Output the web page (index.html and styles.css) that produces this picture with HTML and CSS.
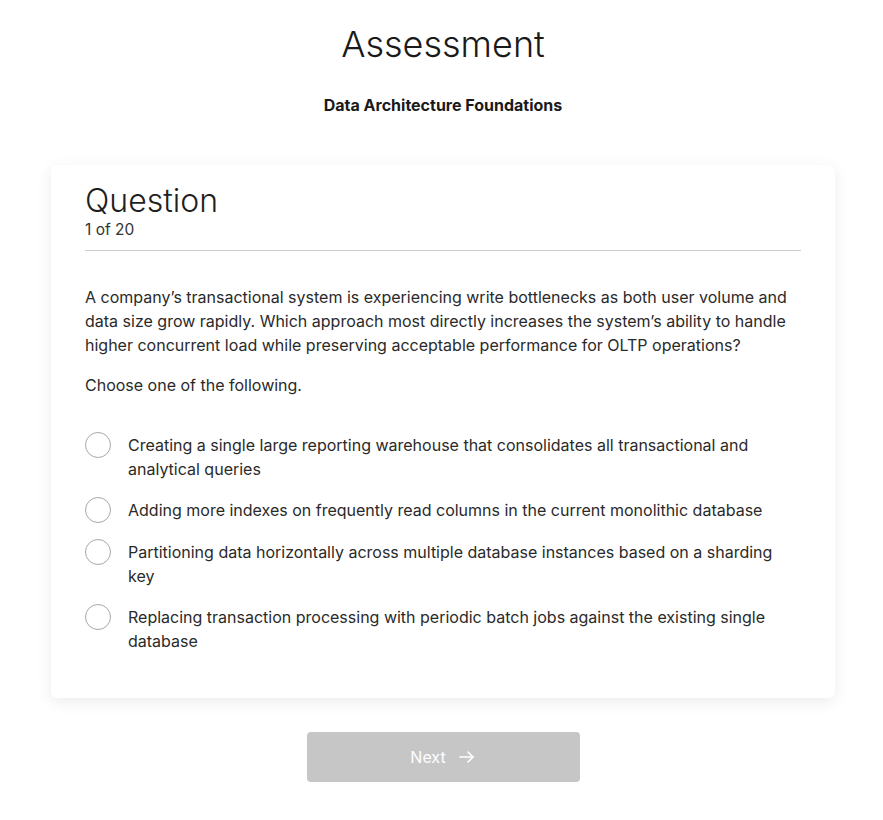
FILE: index.html
```html
<!DOCTYPE html>
<html lang="en">
<head>
    <meta charset="UTF-8">
    <meta name="viewport" content="width=device-width, initial-scale=1.0">
    <title>Assessment</title>
    <link rel="stylesheet" href="styles.css">
</head>
<body>
    <div class="page">
        <h1 class="title">Assessment</h1>
        <p class="subtitle">Data Architecture Foundations</p>

        <div class="card">
            <div class="card-head">
                <h2>Question</h2>
                <span class="counter">1 of 20</span>
            </div>
            <p class="question">A company’s transactional system is experiencing write bottlenecks as both user volume and data size grow rapidly. Which approach most directly increases the system’s ability to handle higher concurrent load while preserving acceptable performance for OLTP operations?</p>
            <p class="hint">Choose one of the following.</p>
            <ul class="options">
                <li><span class="radio"></span><span>Creating a single large reporting warehouse that consolidates all transactional and analytical queries</span></li>
                <li><span class="radio"></span><span>Adding more indexes on frequently read columns in the current monolithic database</span></li>
                <li><span class="radio"></span><span>Partitioning data horizontally across multiple database instances based on a sharding key</span></li>
                <li><span class="radio"></span><span>Replacing transaction processing with periodic batch jobs against the existing single database</span></li>
            </ul>
        </div>

        <button class="next" disabled>
            Next
            <svg width="18" height="18" viewBox="0 0 18 18" fill="none" stroke="#fff" stroke-width="1.6" stroke-linecap="round" stroke-linejoin="round">
                <path d="M2 9h13"/>
                <path d="M10 4l5 5-5 5"/>
            </svg>
        </button>
    </div>
</body>
</html>
```

FILE: styles.css
```css
body {
    margin: 0;
    padding: 0;
    background-color: #ffffff;
    color: #1f1f1f;
    font-family: Inter, "Noto Sans", sans-serif;
}
.page {
    display: flex;
    flex-direction: column;
    align-items: center;
    padding: 20px 0 40px;
}
.title {
    margin: 0 0 0 3px;
    font-size: 36px;
    font-weight: 300;
    line-height: 48px;
    color: #1a1a1a;
}
.subtitle {
    margin: 27px 0 0 3px;
    font-size: 16px;
    font-weight: 700;
    line-height: 20px;
    color: #1a1a1a;
}
.card {
    box-sizing: border-box;
    width: 784px;
    margin: 50px 0 0 3px;
    padding: 17px 34px 45px;
    background-color: #ffffff;
    border-radius: 6px;
    box-shadow: 0 4px 16px rgba(0, 0, 0, 0.08);
}
.card-head {
    display: flex;
    flex-direction: column;
    padding-bottom: 11px;
    border-bottom: 1px solid #cfcfcf;
}
.card-head h2 {
    margin: 0;
    font-size: 32px;
    font-weight: 300;
    line-height: 38px;
    color: #1f1f1f;
}
.counter {
    font-size: 15.5px;
    line-height: 19px;
    color: #333;
}
.question {
    margin: 34px 0 0;
    font-size: 16px;
    line-height: 24px;
    color: #2a2a2a;
}
.hint {
    margin: 16px 0 0;
    font-size: 16px;
    line-height: 24px;
    color: #2a2a2a;
}
.options {
    list-style: none;
    margin: 36px 0 0;
    padding: 0;
    display: flex;
    flex-direction: column;
    gap: 17px;
}
.options li {
    display: flex;
    align-items: flex-start;
    gap: 17px;
    font-size: 16px;
    line-height: 24px;
    color: #2a2a2a;
}
.radio {
    flex: none;
    box-sizing: border-box;
    width: 26px;
    height: 26px;
    margin-top: -1px;
    border: 1.5px solid #a8a8a8;
    border-radius: 50%;
}
.next {
    display: flex;
    align-items: center;
    justify-content: center;
    gap: 12px;
    width: 273px;
    height: 50px;
    margin: 34px 0 0 3px;
    border: none;
    border-radius: 4px;
    background-color: #c6c6c6;
    color: #ffffff;
    font-family: Inter, "Noto Sans", sans-serif;
    font-size: 16px;
}
```
